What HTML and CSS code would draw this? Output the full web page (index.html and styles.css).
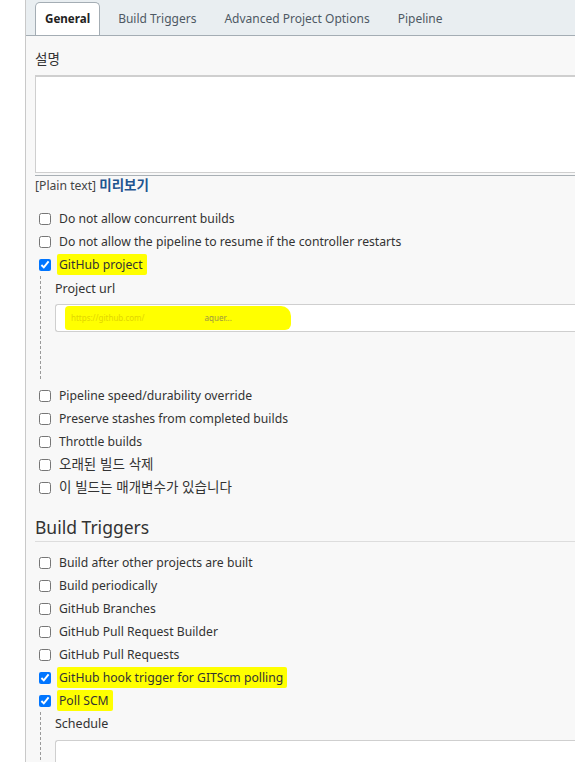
FILE: index.html
```html
<!DOCTYPE html>
<html lang="ko">
<head>
<meta charset="utf-8">
<link rel="stylesheet" href="styles.css">
</head>
<body>
<div class="page">
  <div class="gutter"></div>
  <div class="panel">
    <div class="tabs">
      <div class="tab active">General</div>
      <div class="tab">Build Triggers</div>
      <div class="tab">Advanced Project Options</div>
      <div class="tab">Pipeline</div>
    </div>
    <div class="content">
      <div class="field-label ko">설명</div>
      <div class="textarea"></div>
      <div class="preview-bar"></div>
      <div class="preview">[Plain text] <span class="link ko">미리보기</span></div>

      <div class="options first">
        <label class="row"><input type="checkbox"><span>Do not allow concurrent builds</span></label>
        <label class="row"><input type="checkbox"><span>Do not allow the pipeline to resume if the controller restarts</span></label>
        <label class="row"><input type="checkbox" checked><span class="hl hl-a">GitHub project</span></label>
      </div>
      <div class="nested nested-url">
        <div class="sub-label">Project url</div>
        <div class="input">
          <div class="scribble"><span class="blur">https://github.com/</span><span class="blur2">aquer...</span></div>
        </div>
      </div>
      <div class="options">
        <label class="row"><input type="checkbox"><span>Pipeline speed/durability override</span></label>
        <label class="row"><input type="checkbox"><span>Preserve stashes from completed builds</span></label>
        <label class="row"><input type="checkbox"><span>Throttle builds</span></label>
        <label class="row"><input type="checkbox"><span class="ko">오래된 빌드 삭제</span></label>
        <label class="row"><input type="checkbox"><span class="ko">이 빌드는 매개변수가 있습니다</span></label>
      </div>

      <h2 class="section">Build Triggers</h2>
      <div class="options trig">
        <label class="row"><input type="checkbox"><span>Build after other projects are built</span></label>
        <label class="row"><input type="checkbox"><span>Build periodically</span></label>
        <label class="row"><input type="checkbox"><span>GitHub Branches</span></label>
        <label class="row"><input type="checkbox"><span>GitHub Pull Request Builder</span></label>
        <label class="row"><input type="checkbox"><span>GitHub Pull Requests</span></label>
        <label class="row"><input type="checkbox" checked><span class="hl hl-b">GitHub hook trigger for GITScm polling</span></label>
        <label class="row"><input type="checkbox" checked><span class="hl hl-c">Poll SCM</span></label>
      </div>
      <div class="nested nested-sched">
        <div class="sub-label">Schedule</div>
        <div class="textarea small"></div>
      </div>
    </div>
  </div>
</div>
</body>
</html>
```

FILE: styles.css
```css
html, body {
  margin: 0;
  padding: 0;
  background: #ffffff;
  overflow: hidden;
}
body {
  font-family: "Noto Sans", "Noto Sans CJK KR", sans-serif;
  font-size: 12.2px;
  color: #333333;
  width: 575px;
  height: 762px;
}
.ko {
  font-family: "Noto Sans CJK KR", sans-serif;
  font-size: 13.5px;
  line-height: 1;
}
.page {
  display: flex;
  height: 762px;
  overflow: hidden;
}
.gutter {
  width: 25px;
  flex: none;
  background: #ffffff;
}
.panel {
  flex: none;
  width: 700px;
  border-left: 1px solid #c9c9c9;
  background: #f8f8f8;
}
.tabs {
  display: flex;
  align-items: flex-end;
  height: 35px;
  background: #e9eef1;
  border-bottom: 1px solid #a4adb4;
  padding-left: 9px;
  gap: 8px;
}
.tab {
  height: 32px;
  line-height: 32px;
  padding: 0 10px;
  color: #4e5964;
  font-size: 12px;
  box-sizing: border-box;
  white-space: nowrap;
}
.tab.active {
  background: #ffffff;
  border: 1px solid #a4adb4;
  border-bottom: none;
  border-radius: 5px 5px 0 0;
  font-weight: 700;
  color: #222;
  height: 33px;
  line-height: 31px;
  font-size: 11.6px;
  padding: 0 9px;
}
.content {
  padding: 13px 0 0 9px;
}
.field-label {
  line-height: 18px;
  height: 18px;
  margin-bottom: 8px;
}
.textarea {
  height: 98px;
  box-sizing: border-box;
  background: #fff;
  border: 1px solid #cfcfcf;
  border-top: 2px solid #cfcfcf;
  border-right: none;
}
.preview-bar {
  margin-top: 2px;
  border-top: 1px solid #a9b0b5;
}
.preview {
  line-height: 18px;
  height: 18px;
  margin-top: 1px;
  color: #444;
}
.link {
  color: #1e5590;
  font-weight: 600;
}
.options.first {
  margin-top: 12px;
}
.row {
  display: flex;
  align-items: center;
  height: 23px;
  white-space: nowrap;
}
.row input {
  width: 12px;
  height: 12px;
  margin: 0 8px 0 4px;
  flex: none;
}
.row .ko {
  position: relative;
  top: -1px;
}
.hl {
  background: #ffff00;
  padding: 2px 4px 2px 2px;
  margin-left: -2px;
  border-radius: 2px;
}
.nested {
  margin-left: 5px;
  border-left: 1px dashed #9a9a9a;
  padding-left: 14px;
}
.nested-url {
  padding-top: 4px;
  padding-bottom: 47px;
  margin-bottom: 5px;
}
.sub-label {
  line-height: 18px;
  font-size: 12.5px;
}
.input {
  position: relative;
  margin-top: 6px;
  height: 28px;
  box-sizing: border-box;
  background: #fff;
  border: 1px solid #cfcfcf;
  border-right: none;
  border-radius: 3px 0 0 3px;
}
.scribble {
  position: absolute;
  left: 9px;
  top: 1px;
  width: 226px;
  height: 24px;
  background: #ffff00;
  border-radius: 4px 10px 6px 3px;
  font-size: 8px;
  line-height: 24px;
  white-space: nowrap;
  overflow: hidden;
}
.blur {
  color: #e2d600;
  padding-left: 6px;
}
.blur2 {
  color: #9d9640;
  padding-left: 60px;
}
.section {
  margin: 16px 0 0 0;
  font-size: 17.5px;
  font-weight: 400;
  line-height: 24px;
  padding-bottom: 2px;
  border-bottom: 1px solid #dddddd;
  color: #333;
}
.options.trig {
  margin-top: 9px;
}
.nested-sched {
  padding-top: 3px;
  padding-bottom: 40px;
}
.textarea.small {
  margin-top: 7px;
  height: 60px;
  border-top: 1px solid #cfcfcf;
  border-radius: 3px 0 0 3px;
}
```
